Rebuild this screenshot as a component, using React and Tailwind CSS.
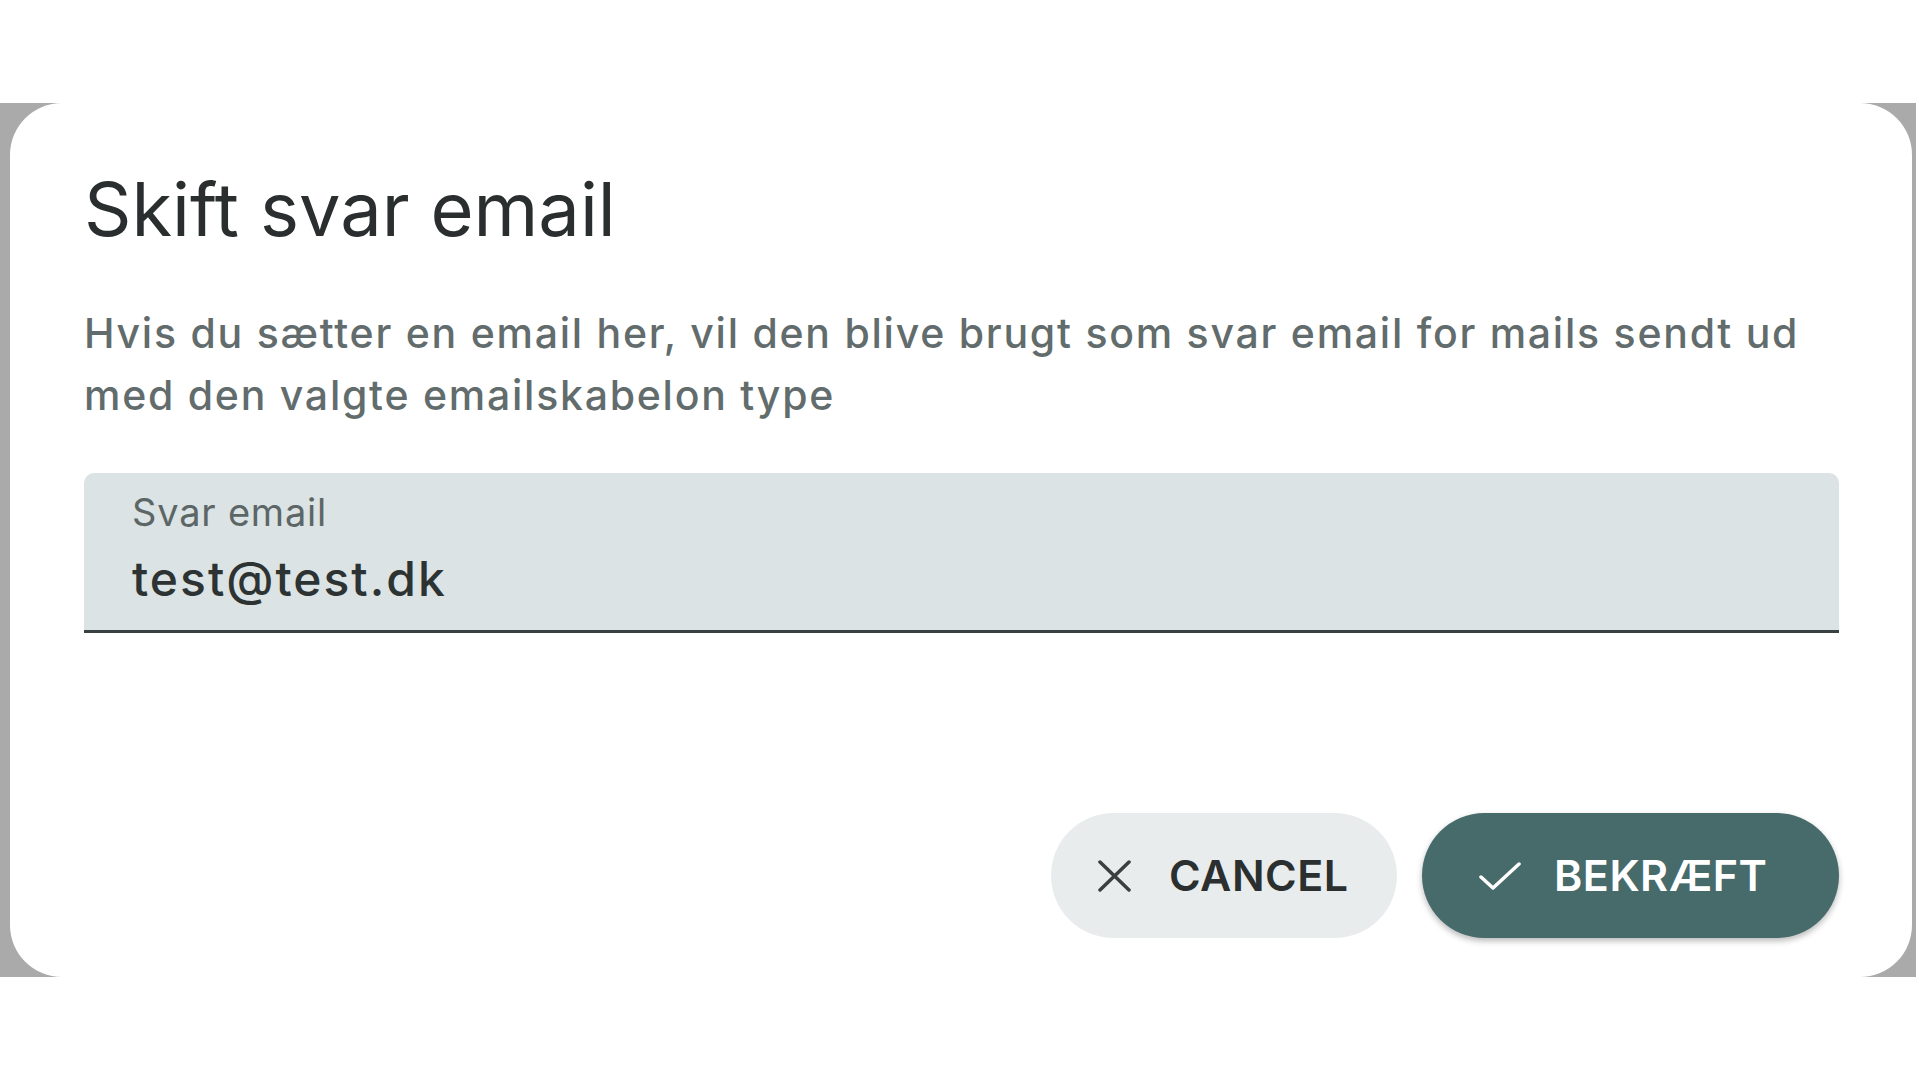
export default function App() {
  const font = { fontFamily: "Inter, 'Noto Sans', sans-serif" };

  return (
    <div className="w-[1920px] h-[1080px] bg-white pt-[103px]" style={font}>
      {/* dimmed backdrop, only the edges show */}
      <div className="w-[1916px] h-[874px] bg-[#aaaaaa] pl-[10px] pr-[4px]">
        <div className="h-full bg-white rounded-[52px] pt-[61px] pb-[39px] pl-[74px] pr-[73px] flex flex-col">
          <h2 className="text-[74px] leading-[90px] font-normal text-[#2a2e2e]">Skift svar email</h2>

          <p className="mt-[48px] text-[41px] leading-[62px] font-medium tracking-[1.75px] text-[#626c6c]">
            Hvis du sætter en email her, vil den blive brugt som svar email for mails sendt ud med den valgte emailskabelon type
          </p>

          <div className="mt-[47px] bg-[#dbe3e4] rounded-t-[10px] border-b-[3px] border-[#3b4141] pt-[16px] pb-[22px] pl-[48px]">
            <div className="text-[38px] leading-[46px] tracking-[0.8px] text-[#5c6666]">Svar email</div>
            <div className="mt-[15px] text-[48px] leading-[58px] font-medium tracking-[2px] text-[#2d3232]">test@test.dk</div>
          </div>

          <div className="mt-auto flex justify-end gap-[25px]">
            <button className="w-[346px] h-[125px] rounded-full bg-[#e9eced] flex items-center pl-[46px] gap-[37px] text-[#2b2f2f]">
              <svg width="35" height="32" viewBox="0 0 35 32" fill="none" stroke="#3a3f3f" strokeWidth="3.5" strokeLinecap="round">
                <path d="M3 2 32 30M32 2 3 30" />
              </svg>
              <span className="text-[43px] font-semibold leading-none tracking-[0.5px]">CANCEL</span>
            </button>
            <button className="w-[417px] h-[125px] rounded-full bg-[#476a6b] shadow-[0_3px_6px_rgba(0,0,0,0.28)] flex items-center pl-[57px] gap-[33px] text-white">
              <svg width="42" height="28" viewBox="0 0 42 28" fill="none" stroke="white" strokeWidth="3.5" strokeLinecap="round" strokeLinejoin="round">
                <path d="M2 15 14 26 40 2" />
              </svg>
              <span className="text-[43px] font-semibold leading-none tracking-[0.5px]">BEKRÆFT</span>
            </button>
          </div>
        </div>
      </div>
    </div>
  );
}
